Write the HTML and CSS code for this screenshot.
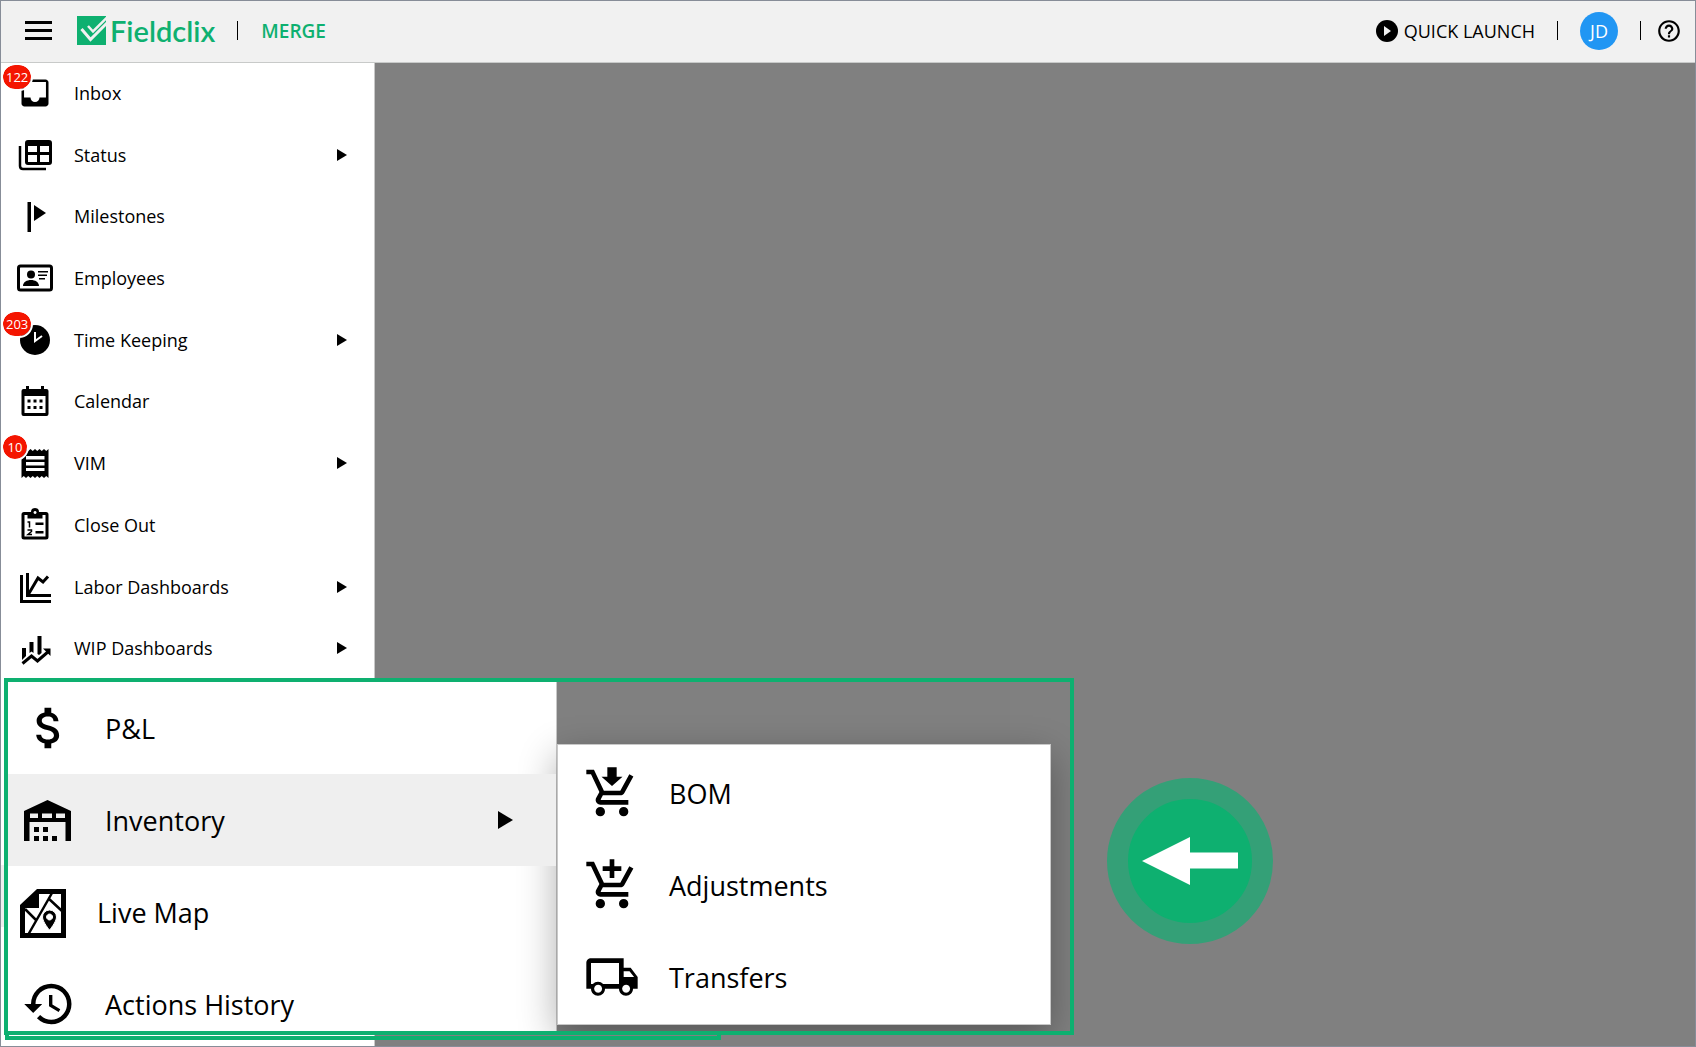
FILE: index.html
```html
<!DOCTYPE html>
<html lang="en">
  <head>
    <meta charset="UTF-8" />
    <meta name="viewport" content="width=device-width, initial-scale=1.0" />
    <title>Fieldclix</title>
    <link rel="stylesheet" href="styles.css">
  </head>
  <body>
    <div class="app">
      <!-- TOP BAR -->
      <header class="topbar">
        <button class="icon-button" aria-label="Menu">
          <svg width="27" height="19" viewBox="0 0 27 19"><path d="M0 0h27v3H0zM0 8h27v3H0zM0 16h27v3H0z"/></svg>
        </button>
        <a class="logo" href="#">
          <svg width="29" height="29" viewBox="0 0 29 29">
            <path fill="#0eb070" d="M0 0h29v29H0z"/>
            <g fill="none" stroke="#f1f1f1">
              <path stroke-width="3" d="M4.500 13l9 10.500L30 7"/>
              <path stroke-width="2.500" d="M11 10l5 5.500L30 1.500"/>
            </g>
          </svg>
          <span>Fieldclix</span>
        </a>
        <span class="divider"></span>
        <span class="company">MERGE</span>
        <div class="topbar-right">
          <button class="icon-button">
            <svg width="22" height="22" viewBox="0 0 22 22"><circle cx="11" cy="11" r="11"/><path fill="#f1f1f1" d="M8 6l7 5-7 5z"/></svg>
            QUICK LAUNCH
          </button>
          <span class="divider"></span>
          <button class="avatar">JD</button>
          <span class="divider"></span>
          <button class="icon-button" aria-label="Help">
            <svg width="26" height="26" viewBox="0 0 24 24"><path d="M11 18h2v-2h-2v2zm1-16C6.480 2 2 6.480 2 12s4.480 10 10 10 10-4.480 10-10S17.520 2 12 2zm0 18c-4.410 0-8-3.590-8-8s3.590-8 8-8 8 3.590 8 8-3.590 8-8 8zm0-14c-2.210 0-4 1.790-4 4h2c0-1.100.9-2 2-2s2 .9 2 2c0 2-3 1.750-3 5h2c0-2.250 3-2.500 3-5 0-2.210-1.790-4-4-4z"/></svg>
          </button>
        </div>
      </header>

      <!-- SIDEBAR -->
      <div class="body">
        <nav class="sidebar">
          <a class="item" href="#">
            <svg class="icon" viewBox="0 0 24 24"><path d="M19 3H5C3.900 3 3 3.900 3 5v14c0 1.100.9 2 2 2h14c1.100 0 2-.9 2-2V5c0-1.100-.9-2-2-2zm.3 12H15c0 1.660-1.350 3-3 3s-3-1.340-3-3H4.700V4.700h14.600z"/></svg>
            <span class="badge">122</span>
            <span>Inbox</span>
          </a>
          <a class="item" href="#">
            <svg class="icon" viewBox="0 0 36 36">
              <path fill-rule="evenodd" d="M11 3h21a3 3 0 0 1 3 3v19a3 3 0 0 1-3 3H11a3 3 0 0 1-3-3V6a3 3 0 0 1 3-3zM11 9v6h9V9zM23 9v6h9V9zM11 18v7h9v-7zM23 18v7h9v-7z"/>
              <path fill="none" stroke="#000" stroke-width="2.500" d="M3 9v20q0 3 3 3h23"/>
            </svg>
            <span>Status</span>
            <span class="arrow"></span>
          </a>
          <a class="item" href="#">
            <svg class="icon" viewBox="0 0 36 36"><path d="M10.500 4H14v30h-3.500zM17 7l12 8-12 8z"/></svg>
            <span>Milestones</span>
          </a>
          <a class="item" href="#">
            <svg class="icon" viewBox="0 0 36 36">
              <rect x="1.500" y="6" width="33" height="24" rx="2" fill="none" stroke="#000" stroke-width="3"/>
              <circle cx="14" cy="14.500" r="4"/>
              <path d="M6 26c0-4 4-6 8-6s8 2 8 6zM21 11h10v1.500H21zM21 14.500h9V16h-9zM22 18h6v1.500h-6z"/>
            </svg>
            <span>Employees</span>
          </a>
          <a class="item" href="#">
            <svg class="icon" viewBox="0 0 36 36"><circle cx="18" cy="18" r="15"/><path fill="none" stroke="#fff" stroke-width="2" d="M18 10v9l7-5"/></svg>
            <span class="badge">203</span>
            <span>Time Keeping</span>
            <span class="arrow"></span>
          </a>
          <a class="item" href="#">
            <svg class="icon" viewBox="0 0 36 36">
              <path fill-rule="evenodd" d="M9 3h3v3h12V3h3v3h2.500a2 2 0 0 1 2 2v23a2 2 0 0 1-2 2h-23a2 2 0 0 1-2-2V8a2 2 0 0 1 2-2H9zM7.500 13v17h21V13z"/>
              <path d="M10.500 16.500h3v3h-3zM16.500 16.500h3v3h-3zM22.500 16.500h3v3h-3zM10.500 23h3v3h-3zM16.500 23h3v3h-3zM22.500 23h3v3h-3z"/>
            </svg>
            <span>Calendar</span>
          </a>
          <a class="item" href="#">
            <svg class="icon" viewBox="0 0 36 36"><path fill-rule="evenodd" d="M4.500 4l2.250 2L9 4l2.250 2 2.250-2 2.250 2L18 4l2.250 2 2.250-2 2.250 2L27 4l2.250 2 2.250-2v29l-2.250-2L27 33l-2.250-2-2.250 2-2.250-2L18 33l-2.250-2-2.250 2-2.250-2L9 33l-2.250-2-2.250 2zM9 11v3.500h18.500V11zM9 17v3.500h18.500V17zM9 23v3h18.500v-3z"/></svg>
            <span class="badge">10</span>
            <span>VIM</span>
            <span class="arrow"></span>
          </a>
          <a class="item" href="#">
            <svg class="icon" viewBox="0 0 36 36">
              <path fill-rule="evenodd" d="M7 5h7a4 4 0 0 1 8 0h7q2.500 0 2.500 2.500V30q0 2.500-2.500 2.500H7Q4.500 32.500 4.500 30V7.500Q4.500 5 7 5zM7.500 8v21.500h21V8h-3v3.500h-15V8zM18 4a1.500 1.500 0 1 0 .1 0z"/>
              <path d="M18.500 15.500h8v2.500h-8zM18.500 24h8v2.500h-8z"/>
              <path fill="none" stroke="#000" stroke-width="1.500" d="M10.500 15h2v5.500M10.500 23h4v1.500l-3.500 3h4"/>
            </svg>
            <span>Close Out</span>
          </a>
          <a class="item" href="#">
            <svg class="icon" viewBox="0 0 36 36"><path fill="none" stroke="#000" stroke-width="3" d="M4.500 6v26.500H34M10.500 4v22.500H34M11 26L21 9l5 4 5-5.500"/></svg>
            <span>Labor Dashboards</span>
            <span class="arrow"></span>
          </a>
          <a class="item" href="#">
            <svg class="icon" viewBox="0 0 36 36">
              <path d="M5 18h4v8l-4 4zM12.500 12h4v11l-2-1.500-2 1.500zM20.500 6h4v17l-2.500 2-1.500-1z"/>
              <path fill="none" stroke="#000" stroke-width="3" d="M5.500 33.500l9-7.500 6 5L32 21"/>
              <path d="M26 18.500h7.500V26z"/>
            </svg>
            <span>WIP Dashboards</span>
            <span class="arrow"></span>
          </a>
          <div class="selected-row"></div>
        </nav>
        <main class="workspace"></main>
      </div>

      <!-- ZOOMED CALLOUT -->
      <div class="callout-base"></div>
      <section class="callout">
        <nav class="panel">
          <a class="item" href="#">
            <svg class="icon" viewBox="0 0 24 24"><path d="M11.800 10.900c-2.270-.59-3-1.200-3-2.150 0-1.090 1.010-1.850 2.700-1.850 1.780 0 2.440.85 2.500 2.100h2.210c-.07-1.720-1.120-3.300-3.210-3.810V3h-3v2.160c-1.940.42-3.500 1.680-3.500 3.610 0 2.310 1.910 3.460 4.700 4.130 2.500.6 3 1.480 3 2.410 0 .69-.49 1.790-2.700 1.790-2.060 0-2.870-.92-2.980-2.100h-2.200c.12 2.190 1.760 3.420 3.680 3.830V21h3v-2.150c1.950-.37 3.500-1.500 3.500-3.550 0-2.840-2.430-3.810-4.700-4.400z"/></svg>
            <span>P&amp;L</span>
          </a>
          <a class="item active" href="#">
            <svg class="icon" viewBox="0 0 54 54">
              <path fill-rule="evenodd" d="M2 18L25.500 7 49 18v30h-5.500V29H7.500v19H2zM8 20.500V25h8v-4.500zM20 20.500V25h10v-4.500zM34 20.500V25h9v-4.500z"/>
              <path d="M12 34h5v5h-5zM21 34h5v5h-5zM12 43h5v5h-5zM21 43h5v5h-5zM30 43h5v5h-5z"/>
            </svg>
            <span>Inventory</span>
            <span class="arrow"></span>
          </a>
          <a class="item outdent" href="#">
            <svg class="icon" viewBox="0 0 54 54">
              <path fill-rule="evenodd" d="M23 4h29v49H6V20zM25 9v14H11v25h36V9z"/>
              <path fill="none" stroke="#000" stroke-width="2.500" d="M38 8L14 50M11 24l11 11M34 13l14 13"/>
              <path fill-rule="evenodd" stroke="#fff" d="M35.500 25a7 7 0 0 1 7 7c0 5-7 13-7 13s-7-8-7-13a7 7 0 0 1 7-7zm0 4a3 3 0 1 0 .1 0z"/>
            </svg>
            <span>Live Map</span>
          </a>
          <a class="item" href="#">
            <svg class="icon" viewBox="0 0 24 24"><path d="M13 3a9 9 0 0 0-9 9H1l3.890 3.890.07.14L9 12H6c0-3.870 3.130-7 7-7s7 3.130 7 7-3.130 7-7 7c-1.930 0-3.680-.79-4.940-2.060l-1.420 1.420A8.950 8.950 0 0 0 13 21a9 9 0 0 0 0-18zm-1 5v5l4.280 2.540.72-1.210-3.500-2.080V8H12z"/></svg>
            <span>Actions History</span>
          </a>
        </nav>
        <nav class="submenu">
          <a class="item" href="#">
            <svg class="icon" viewBox="0 0 24 24"><path d="M10 1h4v4h2.500L12 9 7.500 5H10zM7 18a2 2 0 1 0 0 4 2 2 0 0 0 0-4zm10 0a2 2 0 1 0 0 4 2 2 0 0 0 0-4zm-9.830-3.250.03-.12.9-1.630h7.450c.75 0 1.410-.41 1.750-1.030l3.860-7.010L19.420 4l-3.870 7H8.530L4.270 2H1v2h2l3.600 7.590-1.350 2.450c-.16.28-.25.61-.25.96 0 1.100.9 2 2 2h12v-2H7.420c-.13 0-.25-.11-.25-.25z"/></svg>
            <span>BOM</span>
          </a>
          <a class="item" href="#">
            <svg class="icon" viewBox="0 0 24 24"><path d="M11 9h2V6h3V4h-3V1h-2v3H8v2h3zM7 18a2 2 0 1 0 0 4 2 2 0 0 0 0-4zm10 0a2 2 0 1 0 0 4 2 2 0 0 0 0-4zm-9.830-3.250.03-.12.9-1.630h7.450c.75 0 1.410-.41 1.750-1.030l3.860-7.010L19.420 4l-3.870 7H8.530L4.270 2H1v2h2l3.600 7.590-1.350 2.450c-.16.28-.25.61-.25.96 0 1.100.9 2 2 2h12v-2H7.420c-.13 0-.25-.11-.25-.25z"/></svg>
            <span>Adjustments</span>
          </a>
          <a class="item" href="#">
            <svg class="icon" viewBox="0 0 24 24"><path fill-rule="evenodd" d="M20 8h-3V4H3c-1.100 0-2 .9-2 2v11h2c0 1.660 1.340 3 3 3s3-1.340 3-3h6c0 1.660 1.340 3 3 3s3-1.340 3-3h2v-5zM3 6v9h.78a3 3 0 0 1 4.440 0H15V6zM17 9.500h2.500l1.960 2.500H17zM6 15.300a1.700 1.700 0 1 0 .1 0zM18 15.300a1.700 1.700 0 1 0 .1 0z"/></svg>
            <span>Transfers</span>
          </a>
        </nav>
      </section>

      <div class="pointer">
        <svg width="96" height="48" viewBox="0 0 96 48"><path fill="#fff" d="M0 24L48 0v15.500h48v16H48V48z"/></svg>
      </div>
    </div>
  </body>
</html>
```
FILE: styles.css
```css
* {
  box-sizing: border-box;
  margin: 0;
  padding: 0;
}

body {
  font-family: "Open Sans", "Noto Sans", sans-serif;
  font-size: 18px;
  color: #000;
}

a {
  color: inherit;
  text-decoration: none;
}

button {
  font: inherit;
  color: inherit;
  border: none;
  cursor: pointer;
}

.app {
  position: relative;
  display: flex;
  flex-direction: column;
  height: 100vh;
  border: 1px solid #878d98;
  overflow: hidden;
}

/* TOP BAR */
.topbar {
  display: flex;
  align-items: center;
  height: 62px;
  padding: 0 13px 2px 24px;
  background-color: #f1f1f1;
  border-bottom: 1px solid #c8cac9;
}

.icon-button {
  display: flex;
  align-items: center;
  gap: 6px;
  background: none;
}

.logo {
  display: flex;
  align-items: center;
  gap: 4px;
  margin: 0 22px 0 25px;
  color: #0eb070;
  font-family: Lato, sans-serif;
  font-size: 29px;
  font-weight: 600;
}

.divider {
  width: 1px;
  height: 19px;
  background-color: #000;
}

.company {
  margin-left: 23px;
  color: #0eb070;
  font-size: 19px;
  font-weight: 600;
}

.topbar-right {
  display: flex;
  align-items: center;
  gap: 22px;
  margin-left: auto;
}

.topbar-right .icon-button:last-child {
  margin-left: -7px;
}

.avatar {
  width: 38px;
  height: 38px;
  border-radius: 50%;
  background-color: #2196f3;
  color: #fff;
}

/* SIDEBAR */
.body {
  display: flex;
  flex: 1;
  background: linear-gradient(to right, #fff 373px, #c8c8c8 373px, #c8c8c8 374px, #808080 374px);
}

.sidebar {
  display: grid;
  grid-template-rows: repeat(14, 1fr);
  width: 374px;
  height: 864px;
}

.workspace {
  flex: 1;
}

.item {
  position: relative;
  display: flex;
  align-items: center;
}

.sidebar .item {
  gap: 21px;
  padding: 0 28px 2px 16px;
}

.icon {
  flex: none;
  width: 36px;
  height: 36px;
}

.arrow {
  margin-left: auto;
  border-left: 10px solid #000;
  border-top: 6px solid transparent;
  border-bottom: 6px solid transparent;
}

.badge {
  position: absolute;
  left: 0;
  top: 0;
  padding: 0 3px;
  min-width: 28px;
  border: 2px solid #fff;
  border-radius: 14px;
  background-color: #f41500;
  background-clip: padding-box;
  color: #fff;
  font-size: 13px;
  line-height: 24px;
  text-align: center;
}

.selected-row {
  grid-row: 14;
  background-color: #efefef;
}

/* CALLOUT */
.callout-base {
  position: absolute;
  left: 4px;
  top: 860px;
  width: 716px;
  height: 179px;
  border: 4px solid #0eb070;
}

.callout {
  position: absolute;
  left: 3px;
  top: 677px;
  display: flex;
  align-items: flex-start;
  width: 1070px;
  height: 357px;
  border: 4px solid #0eb070;
  background-color: #808080;
  overflow: hidden;
  font-size: 27px;
}

.panel {
  width: 549px;
  background-color: #fff;
  border-right: 1px solid #c8c8c8;
}

.panel .item {
  height: 92px;
  gap: 29px;
  padding: 0 43px 0 14px;
}

.panel .active {
  background-color: #efefef;
}

.panel .outdent {
  padding-left: 6px;
}

.panel .icon {
  width: 54px;
  height: 54px;
}

.panel .arrow {
  border-left-width: 15px;
  border-top-width: 9px;
  border-bottom-width: 9px;
}

.submenu {
  width: 494px;
  margin-top: 62px;
  padding-top: 3px;
  background-color: #fff;
  border: 1px solid #c8c8c8;
  box-shadow: 0 12px 36px rgba(0, 0, 0, 0.32);
}

.submenu .item {
  height: 92px;
  gap: 29px;
  padding: 0 0 2px 26px;
}

.submenu .icon {
  width: 56px;
  height: 56px;
}

/* ARROW POINTER */
.pointer {
  position: absolute;
  left: 1106px;
  top: 777px;
  display: flex;
  align-items: center;
  justify-content: center;
  width: 166px;
  height: 166px;
  border: 21px solid #34a077;
  border-radius: 50%;
  background-color: #0eb070;
}
```
